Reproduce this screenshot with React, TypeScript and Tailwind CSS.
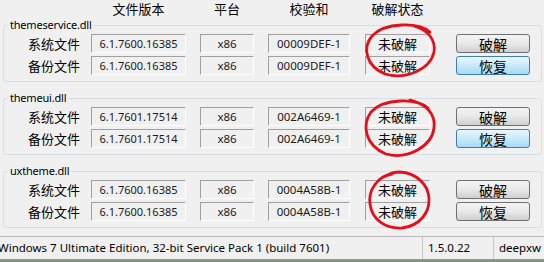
import React from "react";

type Row = { label: string; ver: string; plat: string; sum: string; status: string; btn: string; blue: boolean };
type Group = { name: string; rows: Row[] };

const groups: Group[] = [
  {
    name: "themeservice.dll",
    rows: [
      { label: "系统文件", ver: "6.1.7600.16385", plat: "x86", sum: "00009DEF-1", status: "未破解", btn: "破解", blue: false },
      { label: "备份文件", ver: "6.1.7600.16385", plat: "x86", sum: "00009DEF-1", status: "未破解", btn: "恢复", blue: true },
    ],
  },
  {
    name: "themeui.dll",
    rows: [
      { label: "系统文件", ver: "6.1.7601.17514", plat: "x86", sum: "002A6469-1", status: "未破解", btn: "破解", blue: false },
      { label: "备份文件", ver: "6.1.7601.17514", plat: "x86", sum: "002A6469-1", status: "未破解", btn: "恢复", blue: true },
    ],
  },
  {
    name: "uxtheme.dll",
    rows: [
      { label: "系统文件", ver: "6.1.7600.16385", plat: "x86", sum: "0004A58B-1", status: "未破解", btn: "破解", blue: false },
      { label: "备份文件", ver: "6.1.7600.16385", plat: "x86", sum: "0004A58B-1", status: "未破解", btn: "恢复", blue: false },
    ],
  },
];

const ui = "font-['Noto_Sans','Noto_Sans_CJK_SC',sans-serif]";
const cjk = "font-['Noto_Sans_CJK_SC',sans-serif]";
const box =
  "h-[19px] border-t border-l border-b border-r border-t-[#a0a0a0] border-l-[#a0a0a0] border-b-white border-r-white flex items-center justify-center leading-none text-[#1a1a1a]";
const field = box + " text-[11.5px] font-['Noto_Sans',sans-serif]";

function Btn({ text, blue }: { text: string; blue: boolean }) {
  return (
    <div
      className={
        "ml-[26px] w-[74px] h-[19px] rounded-[3px] border flex items-center justify-center text-[14px] leading-none text-black " +
        cjk +
        " " +
        (blue
          ? "border-[#3c7fb1] bg-gradient-to-b from-[#eaf6fd] via-[#c9e9fb] to-[#a7d9f5]"
          : "border-[#707070] bg-gradient-to-b from-[#f4f4f4] via-[#e8e8e8] to-[#d0d0d0]")
      }
    >
      {text}
    </div>
  );
}

function GroupBox({ g, first }: { g: Group; first: boolean }) {
  return (
    <fieldset
      className={
        "ml-[3px] w-[539px] border border-[#d5dfe5] rounded-[3px] pt-[2px] pb-[6px] " + (first ? "" : "mt-[9px]")
      }
    >
      <legend className={"ml-[4px] px-[2px] text-[11px] tracking-[-0.2px] leading-[14px] text-black " + ui}>
        {g.name}
      </legend>
      <div className="flex flex-col gap-[3px]">
        {g.rows.map((r, i) => (
          <div key={i} className="flex items-center h-[19px]">
            <div className={"w-[76px] text-right text-[13px] leading-none text-black " + cjk}>{r.label}</div>
            <div className={"ml-[11px] w-[95px] text-[11px] font-['Noto_Sans',sans-serif] " + box}>{r.ver}</div>
            <div className={"ml-[14px] w-[54px] " + field}>{r.plat}</div>
            <div className={"ml-[14px] w-[82px] " + field}>{r.sum}</div>
            <div className={"ml-[15px] w-[65px] text-[13px] text-black " + cjk + " " + box}>{r.status}</div>
            <Btn text={r.btn} blue={r.blue} />
          </div>
        ))}
      </div>
    </fieldset>
  );
}

export default function App() {
  return (
    <div className="relative w-[544px] h-[262px] overflow-hidden bg-[#f0f0f0] flex flex-col">
      <div className={"h-[18px] flex items-start pl-[91px] pt-[1px] text-[13px] leading-[15px] text-black " + cjk}>
        <div className="w-[95px] text-center">文件版本</div>
        <div className="ml-[14px] w-[54px] text-center">平台</div>
        <div className="ml-[14px] w-[82px] text-center">校验和</div>
        <div className="ml-[15px] w-[65px] text-center">破解状态</div>
      </div>
      {groups.map((g, i) => (
        <GroupBox key={i} g={g} first={i === 0} />
      ))}
      <div className={"mt-[8px] h-[23px] border-t border-[#b9b9b9] flex items-center text-[11.5px] text-black " + ui}>
        <div className="ml-[-2px] w-[424px] whitespace-nowrap">
          Windows 7 Ultimate Edition, 32-bit Service Pack 1 (build 7601)
        </div>
        <div className="self-stretch w-px bg-[#c8c8c8]" />
        <div className="w-[70px] pl-[5px] whitespace-nowrap">1.5.0.22</div>
        <div className="self-stretch w-px bg-[#c8c8c8]" />
        <div className="pl-[5px] whitespace-nowrap">deepxw</div>
      </div>
      <div className="flex-1 border-t border-[#9a9a9a] bg-[#7d967d]" />
      <svg className="absolute left-0 top-0 pointer-events-none" width="544" height="262" viewBox="0 0 544 262">
        <g fill="none" stroke="#e2101b" strokeWidth="2.8" strokeLinecap="round">
          <path d="M430 32 C 418 22, 385 22, 372 36 C 362 48, 366 66, 385 74 C 405 80, 430 70, 434 52 C 436 40, 428 30, 414 26" />
          <path d="M428 108 C 416 98, 384 98, 371 112 C 361 126, 366 146, 386 154 C 408 160, 432 146, 434 128 C 436 114, 426 104, 410 100" />
          <path d="M392 174 C 378 176, 368 190, 370 204 C 372 220, 386 229, 402 228 C 420 226, 430 212, 429 198 C 428 184, 416 173, 400 172 C 394 172, 389 174, 386 176" />
        </g>
      </svg>
    </div>
  );
}
